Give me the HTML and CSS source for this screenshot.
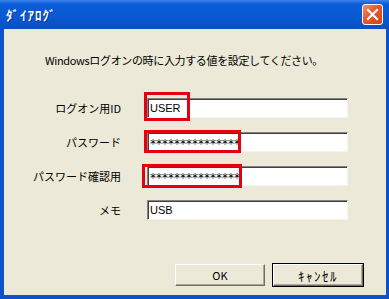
FILE: index.html
```html
<!DOCTYPE html>
<html lang="ja">
<head>
  <meta charset="UTF-8">
  <meta name="viewport" content="width=device-width, initial-scale=1.0">
  <title>ダイアログ</title>
  <link rel="stylesheet" href="styles.css">
</head>
<body>
  <div class="window">
    <div class="titlebar">
      <span class="title">ﾀﾞｲｱﾛｸﾞ</span>
      <div class="close">
        <svg width="13" height="13" viewBox="0 0 13 13">
          <path d="M2 2 L11 11 M11 2 L2 11" stroke="#fff" stroke-width="2.2" stroke-linecap="square"/>
        </svg>
      </div>
    </div>
    <div class="client">
      <p class="message">Windowsログオンの時に入力する値を設定してください。</p>
      <div class="fields">
        <div class="label">ログオン用ID</div>
        <div class="field">
          <div class="box">USER</div>
          <span class="mark mark-id"></span>
        </div>
        <div class="label">パスワード</div>
        <div class="field">
          <div class="box secret">***************</div>
          <span class="mark mark-pass"></span>
        </div>
        <div class="label">パスワード確認用</div>
        <div class="field">
          <div class="box secret">***************</div>
          <span class="mark mark-confirm"></span>
        </div>
        <div class="label">メモ</div>
        <div class="field">
          <div class="box">USB</div>
        </div>
      </div>
      <div class="buttons">
        <button class="btn">OK</button>
        <button class="btn btn-default"><span class="kana">ｷｬﾝｾﾙ</span></button>
      </div>
    </div>
  </div>
</body>
</html>
```

FILE: styles.css
```css
* {
  margin: 0px;
  padding: 0px;
  box-sizing: border-box;
}

body {
  width: 389px;
  height: 299px;
  overflow: hidden;
  font-family: "Noto Sans CJK JP", "Liberation Sans", sans-serif;
  font-size: 11px;
  color: #000;
}

.window {
  width: 389px;
  height: 299px;
  display: flex;
  flex-direction: column;
  background-color: #0c52c9;
}

.titlebar {
  height: 29px;
  display: flex;
  align-items: center;
  justify-content: space-between;
  padding-left: 6px;
  padding-right: 6px;
  background: linear-gradient(#3c84ea 0px, #0b5cd8 4px, #0a58d2 60%, #0a4fc4 100%);
}

.title {
  color: #fff;
  font-weight: bold;
  font-size: 13px;
  letter-spacing: 1px;
  line-height: 13px;
  text-shadow: 1px 1px 0px #0a2f8a;
}

.close {
  width: 21px;
  height: 21px;
  border: 1px solid #fff;
  border-radius: 3px;
  background: linear-gradient(135deg, #f4906c 0%, #e5582c 45%, #d4431d 100%);
  display: flex;
  align-items: center;
  justify-content: center;
}

.client {
  flex: 1;
  margin: 0px 3px 4px 4px;
  background-color: #ece9d8;
  display: flex;
  flex-direction: column;
  padding-top: 24px;
  padding-bottom: 9px;
}

.message {
  padding-left: 41px;
  line-height: 14px;
  letter-spacing: -0.35px;
}

.fields {
  margin-top: 31px;
  display: grid;
  grid-template-columns: 117px 201px;
  column-gap: 26px;
  row-gap: 14px;
  align-items: center;
}

.label {
  text-align: right;
  line-height: 14px;
}

.field {
  position: relative;
  height: 20px;
}

.box {
  height: 20px;
  background-color: #fff;
  border: 1px solid;
  border-color: #848284 #f4f3ee #f4f3ee #848284;
  box-shadow: inset 1px 1px 0px #404040;
  padding-left: 2px;
  font-family: "Liberation Sans", sans-serif;
  font-size: 11px;
  line-height: 18px;
}

.secret {
  font-family: "DejaVu Sans", sans-serif;
  font-size: 12px;
  line-height: 22px;
}

.mark {
  position: absolute;
  border: 3px solid #e3000f;
}

.mark-id {
  left: -3px;
  top: -6px;
  width: 46px;
  height: 29px;
}

.mark-pass {
  left: -3px;
  top: -2px;
  width: 97px;
  height: 23px;
}

.mark-confirm {
  left: -5px;
  top: -2px;
  width: 100px;
  height: 24px;
}

.buttons {
  margin-top: auto;
  display: flex;
  justify-content: flex-end;
  gap: 8px;
  padding-right: 23px;
}

.btn {
  width: 90px;
  height: 22px;
  background-color: #ece9d8;
  border: 1px solid;
  border-color: #fff #716f64 #716f64 #fff;
  box-shadow: inset -1px -1px 0px #aca899;
  font-family: "Noto Sans CJK JP", "Liberation Sans", sans-serif;
  font-size: 11px;
  color: #000;
}

.kana {
  font-size: 13px;
  letter-spacing: 1.5px;
}

.btn-default {
  outline: 1px solid #000;
}
```
